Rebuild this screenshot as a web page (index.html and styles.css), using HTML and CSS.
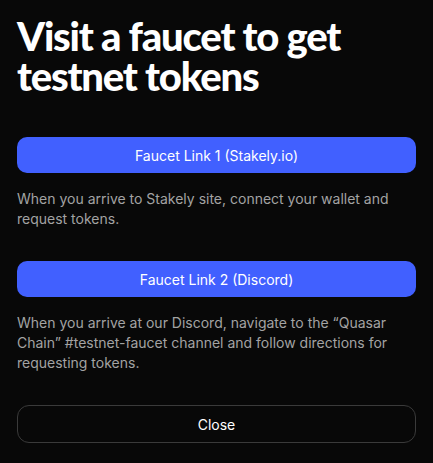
FILE: index.html
```html
<!DOCTYPE html>
<html>
<head>
<meta charset="utf-8">
<link rel="stylesheet" href="styles.css">
</head>
<body>
<div class="modal">
  <h1 class="title">Visit a faucet to get testnet tokens</h1>
  <button class="btn btn-primary">Faucet Link 1 (Stakely.io)</button>
  <p class="desc">When you arrive to Stakely site, connect your wallet and request tokens.</p>
  <button class="btn btn-primary">Faucet Link 2 (Discord)</button>
  <p class="desc">When you arrive at our Discord, navigate to the “Quasar Chain” #testnet-faucet channel and follow directions for requesting tokens.</p>
  <button class="btn btn-outline">Close</button>
</div>
</body>
</html>
```
FILE: styles.css
```css
html, body {
  margin: 0;
  padding: 0;
  background: #080808;
  height: 100%;
}
.modal {
  box-sizing: border-box;
  width: 433px;
  padding: 16px 17px 0 17px;
  display: flex;
  flex-direction: column;
  font-family: Inter, "Noto Sans", sans-serif;
}
.title {
  margin: 0 0 41px 0;
  font-family: Lato, sans-serif;
  font-weight: 900;
  font-size: 40px;
  line-height: 40px;
  letter-spacing: -1.2px;
  color: #ffffff;
  width: 360px;
}
.btn {
  box-sizing: border-box;
  width: 100%;
  height: 36px;
  border-radius: 10px;
  font-family: Inter, sans-serif;
  font-size: 14px;
  color: #ffffff;
  cursor: pointer;
}
.btn-primary {
  background: #4160ff;
  border: none;
}
.btn-outline {
  background: transparent;
  border: 1px solid #3a3a3a;
  height: 38px;
  border-radius: 12px;
}
.desc {
  margin: 16px 0 32px 0;
  font-size: 14px;
  line-height: 20px;
  color: #a3a3a3;
}
```
